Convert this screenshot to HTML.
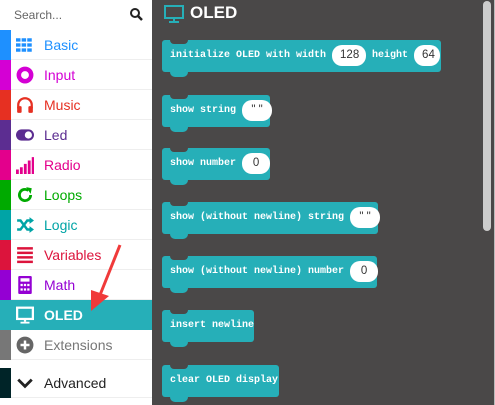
<!DOCTYPE html><html><head><style>
body{margin:0;width:495px;height:405px;overflow:hidden;font-family:"Liberation Sans",sans-serif;background:#fff;position:relative}
.side{position:absolute;left:0;top:0;width:152px;height:405px;background:#fff}
.search{height:30px;position:relative;font-size:12px;color:#666}
.search span{position:absolute;left:14px;top:8px}
.row{position:absolute;left:0;width:152px;height:30px;border-bottom:1px solid #eee;box-sizing:border-box;font-size:14px}
.row .bar{position:absolute;left:0;top:0;width:11px;height:30px}
.row .t{position:absolute;left:44px;top:7px}
.row .ic{position:absolute;left:16px;top:6px;width:18px;height:18px}
.ws{position:absolute;left:152px;top:0;width:343px;height:405px;background:#4a4848}
.blk{position:absolute;left:162px;height:32px;background:#26afb8;border-radius:3px;color:#fff;font:bold 10px "Liberation Mono",monospace;box-sizing:border-box;padding-left:8px;line-height:32px;white-space:nowrap}
.blk:before{content:"";position:absolute;left:8px;top:0;width:18px;height:4px;background:#4a4848;border-radius:0 0 5px 5px}
.blk:after{content:"";position:absolute;left:8px;bottom:-5px;width:18px;height:5px;background:#26afb8;border-radius:0 0 5px 5px}
.pill{display:inline-block;background:#fff;color:#333;border-radius:10px;height:21px;line-height:21px;vertical-align:top;margin-top:5px;text-align:center;font-weight:normal;font-family:"Liberation Sans",sans-serif;font-size:11.5px;padding:0 8px;min-width:6px}
</style></head><body>
<div class="side">
<div class="search"><span>Search...</span>
<svg style="position:absolute;left:129px;top:7px" width="14" height="14" viewBox="0 0 14 14"><circle cx="6" cy="6" r="4" fill="none" stroke="#222" stroke-width="2"/><path d="M9 9l4 4" stroke="#222" stroke-width="2.5"/></svg></div>
<div class="row" style="top:30px;color:#1e90ff"><div class="bar" style="background:#1e90ff"></div><svg class="ic" viewBox="0 0 16 16" fill="#1e90ff"><rect x="0" y="2" width="4" height="3"/><rect x="5" y="2" width="4" height="3"/><rect x="10" y="2" width="4" height="3"/><rect x="0" y="6.5" width="4" height="3"/><rect x="5" y="6.5" width="4" height="3"/><rect x="10" y="6.5" width="4" height="3"/><rect x="0" y="11" width="4" height="3"/><rect x="5" y="11" width="4" height="3"/><rect x="10" y="11" width="4" height="3"/></svg><span class="t">Basic</span></div>
<div class="row" style="top:60px;color:#d400d4"><div class="bar" style="background:#d400d4"></div><svg class="ic" viewBox="0 0 16 16"><circle cx="8" cy="8" r="5.5" fill="none" stroke="#d400d4" stroke-width="4"/></svg><span class="t">Input</span></div>
<div class="row" style="top:90px;color:#e63022"><div class="bar" style="background:#e63022"></div><svg class="ic" viewBox="0 0 16 16"><path d="M2 11V8a6 6 0 0112 0v3" fill="none" stroke="#e63022" stroke-width="2"/><rect x="1" y="9" width="4" height="6" rx="1" fill="#e63022"/><rect x="11" y="9" width="4" height="6" rx="1" fill="#e63022"/></svg><span class="t">Music</span></div>
<div class="row" style="top:120px;color:#5c2d91"><div class="bar" style="background:#5c2d91"></div><svg class="ic" viewBox="0 0 16 16"><rect x="0" y="3" width="16" height="10" rx="5" fill="#5c2d91"/><circle cx="11" cy="8" r="3.2" fill="#fff"/></svg><span class="t">Led</span></div>
<div class="row" style="top:150px;color:#e3008c"><div class="bar" style="background:#e3008c"></div><svg class="ic" viewBox="0 0 16 16" fill="#e3008c"><rect x="0" y="12" width="2.5" height="4"/><rect x="3.5" y="10" width="2.5" height="6"/><rect x="7" y="7" width="2.5" height="9"/><rect x="10.5" y="4" width="2.5" height="12"/><rect x="14" y="1" width="2" height="15"/></svg><span class="t">Radio</span></div>
<div class="row" style="top:180px;color:#00a4a6"><div class="bar" style="background:#00aa00"></div><svg class="ic" viewBox="0 0 16 16"><path d="M13 8a5 5 0 11-2-4" fill="none" stroke="#00aa00" stroke-width="2.5"/><path d="M9 1l5 1-1 5z" fill="#00aa00"/></svg><span class="t" style="color:#00aa00">Loops</span></div>
<div class="row" style="top:210px;color:#00a4a6"><div class="bar" style="background:#00a4a6"></div><svg class="ic" viewBox="0 0 16 16"><path d="M1 4h3l6 8h3M1 12h3l6-8h3" fill="none" stroke="#00a4a6" stroke-width="2.2"/><path d="M12 1l4 3-4 3zM12 9l4 3-4 3z" fill="#00a4a6"/></svg><span class="t">Logic</span></div>
<div class="row" style="top:240px;color:#dc143c"><div class="bar" style="background:#dc143c"></div><svg class="ic" viewBox="0 0 16 16" fill="#dc143c"><rect x="1" y="1" width="14" height="2.2"/><rect x="1" y="5" width="14" height="2.2"/><rect x="1" y="9" width="14" height="2.2"/><rect x="1" y="13" width="14" height="2.2"/></svg><span class="t">Variables</span></div>
<div class="row" style="top:270px;color:#9400d3"><div class="bar" style="background:#9400d3"></div><svg class="ic" viewBox="0 0 16 16"><rect x="2" y="0" width="12" height="16" rx="1" fill="#9400d3"/><rect x="4" y="2" width="8" height="3" fill="#fff"/><g fill="#fff"><rect x="4" y="7" width="2" height="2"/><rect x="7" y="7" width="2" height="2"/><rect x="10" y="7" width="2" height="2"/><rect x="4" y="11" width="2" height="2"/><rect x="7" y="11" width="2" height="2"/><rect x="10" y="11" width="2" height="2"/></g></svg><span class="t">Math</span></div>
<div class="row" style="top:300px;background:#26afb8;color:#fff;font-weight:bold;border:none"><svg class="ic" viewBox="0 0 16 16" style="width:20px;left:15px"><rect x="1" y="1.5" width="14" height="10" fill="none" stroke="#fff" stroke-width="2"/><rect x="7" y="11" width="2" height="3" fill="#fff"/><rect x="4" y="14" width="8" height="1.6" fill="#fff"/></svg><span class="t">OLED</span></div>
<div class="row" style="top:330px;color:#777"><div class="bar" style="background:#777"></div><svg class="ic" viewBox="0 0 16 16"><circle cx="8" cy="8" r="7.5" fill="#666"/><path d="M8 4v8M4 8h8" stroke="#fff" stroke-width="2.2"/></svg><span class="t">Extensions</span></div>
<div class="row" style="top:368px;color:#222;height:30px"><div class="bar" style="background:#002428"></div><svg class="ic" viewBox="0 0 16 16"><path d="M2 5l6 6 6-6" fill="none" stroke="#222" stroke-width="2.5"/></svg><span class="t">Advanced</span></div>
</div>
<div class="ws">
<svg style="position:absolute;left:12px;top:5px" width="20" height="18" viewBox="0 0 20 18"><rect x="1" y="1" width="18" height="12" fill="none" stroke="#26afb8" stroke-width="2"/><rect x="9" y="13" width="2" height="3" fill="#26afb8"/><rect x="5" y="16" width="10" height="2" fill="#26afb8"/></svg>
<div style="position:absolute;left:38px;top:3px;color:#fff;font-weight:bold;font-size:17px">OLED</div>
<div style="position:absolute;left:331px;top:1px;width:8px;height:230px;background:#ccc;border-radius:4px"></div>
<div style="position:absolute;right:0;top:0;width:1px;height:405px;background:#bbb"></div>
</div>
<div class="blk" style="top:40px;width:279px">initialize OLED with width <span class="pill" style="width:18px">128</span> height <span class="pill" style="width:10px">64</span></div>
<div class="blk" style="top:95px;width:108px">show string <span class="pill" style="width:14px">" "</span></div>
<div class="blk" style="top:148px;width:108px">show number <span class="pill" style="width:12px">0</span></div>
<div class="blk" style="top:202px;width:216px">show (without newline) string <span class="pill" style="width:14px">" "</span></div>
<div class="blk" style="top:256px;width:215px">show (without newline) number <span class="pill" style="width:12px">0</span></div>
<div class="blk" style="top:310px;width:92px">insert newline</div>
<div class="blk" style="top:365px;width:117px">clear OLED display</div>
<svg style="position:absolute;left:85px;top:240px" width="40" height="80"><path d="M35 5L15 55" stroke="#f03a3a" stroke-width="3"/><path d="M6 50l18 6-18 15z" fill="#f03a3a"/></svg>
</body></html>
